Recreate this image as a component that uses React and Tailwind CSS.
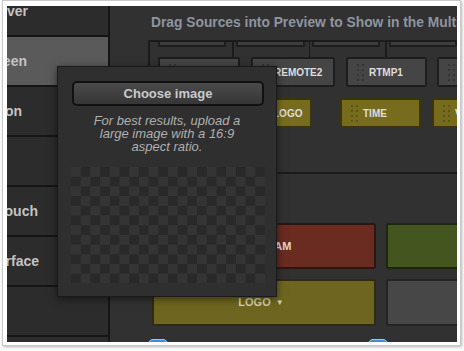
import React from "react";

const font = "font-['Liberation_Sans',Arial,sans-serif]";

const Grip = ({ dot }) => (
  <div className="grid grid-cols-2 gap-x-[3px] gap-y-[3px] shrink-0">
    {[0, 1, 2, 3, 4, 5, 6, 7].map((i) => (
      <span key={i} className={`w-[2px] h-[2px] ${dot}`} />
    ))}
  </div>
);

const Tile = ({ label, w, yellow, className = "" }) => (
  <div
    className={`h-[30px] shrink-0 rounded-[2px] border-2 flex items-center pl-[9px] gap-[5px] ${
      yellow ? "bg-[#776c1d] border-[#3a3410]" : "bg-[#454545] border-[#1d1d1d]"
    } ${w} ${className}`}
  >
    <Grip dot={yellow ? "bg-[#5c5416]" : "bg-[#343434]"} />
    {label && (
      <span className="text-[10px] font-bold text-[#dedede] whitespace-nowrap">{label}</span>
    )}
  </div>
);

const SideRow = ({ label, end, active }) => (
  <div
    className={`h-[50px] shrink-0 border-b-2 border-[#151515] flex items-center ${
      active ? "bg-[#5a5a5a]" : "bg-[#2c2c2c]"
    }`}
  >
    <div className={`${end} flex justify-end whitespace-nowrap text-[14px] font-bold text-[#c3c3c3]`}>
      {label}
    </div>
  </div>
);

export default function App() {
  return (
    <div className={`w-[464px] h-[351px] bg-white ${font}`}>
      <div className="ml-[2px] w-[459px] h-[346px] border border-[#c9c9c9] bg-white pt-[5px] pl-[4px] shadow-[1px_1px_3px_rgba(0,0,0,0.3)]">
        <div className="relative w-[450px] h-[336px] overflow-hidden flex bg-[#313131]">
          {/* sidebar */}
          <div className="w-[103px] shrink-0 border-r-2 border-[#151515] flex flex-col -mt-[19px] overflow-hidden">
            <SideRow label="Server" end="w-[21px]" />
            <SideRow label="Green Screen" end="w-[20px]" active />
            <SideRow label="Transition" end="w-[15px]" />
            <SideRow label="" end="w-[20px]" />
            <SideRow label="Touch" end="w-[31px]" />
            <SideRow label="Surface" end="w-[32px]" />
            <SideRow label="" end="w-[20px]" />
            <SideRow label="" end="w-[20px]" />
          </div>

          {/* main */}
          <div className="flex-1 flex flex-col min-w-0">
            <div className="h-[34px] shrink-0 flex items-center pl-[41px]">
              <span className="text-[13.8px] font-bold text-[#8e959f] whitespace-nowrap">
                Drag Sources into Preview to Show in the Multiview
              </span>
            </div>

            <div className="ml-[38px] h-[134px] shrink-0 border-t-2 border-l-2 border-b-2 border-[#1b1b1b] flex flex-col overflow-hidden">
              <div className="h-[7px] shrink-0 flex items-start">
                <div className="ml-[8px] w-[80px] h-[5px] bg-[#3e3e3e] border-2 border-t-0 border-[#1d1d1d] rounded-b-[2px]" />
                <div className="ml-[6px] w-[2px] h-[15px] bg-[#1b1b1b]" />
                <div className="ml-[2px] w-[81px] h-[5px] bg-[#3e3e3e] border-2 border-t-0 border-[#1d1d1d] rounded-b-[2px]" />
                <div className="ml-[4px] w-[2px] h-[15px] bg-[#1b1b1b]" />
                <div className="ml-[2px] w-[80px] h-[5px] bg-[#3e3e3e] border-2 border-t-0 border-[#1d1d1d] rounded-b-[2px]" />
                <div className="ml-[5px] w-[2px] h-[15px] bg-[#1b1b1b]" />
                <div className="ml-[2px] w-[80px] h-[5px] bg-[#3e3e3e] border-2 border-t-0 border-[#1d1d1d] rounded-b-[2px]" />
              </div>

              <div className="mt-[8px] flex">
                <Tile w="w-[82px]" className="ml-[8px]" />
                <Tile w="w-[84px]" className="ml-[11px]" label="REMOTE2" />
                <Tile w="w-[81px]" className="ml-[11px]" label="RTMP1" />
                <Tile w="w-[80px]" className="ml-[10px]" label="VIDEO" />
              </div>

              <div className="mt-[11px] flex">
                <Tile w="w-[82px]" className="ml-[8px]" yellow />
                <Tile w="w-[62px]" className="ml-[10px]" label="LOGO" yellow />
                <Tile w="w-[81px]" className="ml-[28px]" label="TIME" yellow />
                <Tile w="w-[80px]" className="ml-[11px]" label="VIDEO" yellow />
              </div>
            </div>

            <div className="flex-1 flex flex-col pl-[42px] pt-[49px]">
              <div className="flex gap-[10px]">
                <div className="w-[224px] h-[46px] shrink-0 rounded-[2px] border-2 border-[#2a1712] bg-[#6a2b20] flex items-center justify-center pl-[4px]">
                  <span className="text-[11px] font-bold text-[#e2d6d2]">WEBCAM</span>
                </div>
                <div className="w-[90px] h-[46px] shrink-0 rounded-[2px] border-2 border-[#1f260f] bg-[#44561f]" />
              </div>
              <div className="mt-[10px] flex gap-[10px]">
                <div className="w-[224px] h-[47px] shrink-0 rounded-[2px] border-2 border-[#2f2b0d] bg-[#6e6620] flex items-center justify-center gap-[5px] pr-[6px]">
                  <span className="text-[11px] font-bold text-[#d8d2a6]">LOGO</span>
                  <span className="text-[8px] text-[#d8d2a6]">▼</span>
                </div>
                <div className="w-[90px] h-[47px] shrink-0 rounded-[2px] border-2 border-[#242424] bg-[#474747]" />
              </div>
              <div className="mt-[13px] flex -ml-[4px]">
                <div className="w-[20px] h-[10px] rounded-t-[5px] bg-[#3b8edb] border border-[#9cc8ef]" />
                <div className="ml-[200px] w-[20px] h-[10px] rounded-t-[5px] bg-[#3b8edb] border border-[#9cc8ef]" />
              </div>
            </div>
          </div>

          {/* popover */}
          <div className="absolute left-[50px] top-[60px] w-[220px] h-[231px] bg-[#2f2f2f] border border-[#1a1a1a] shadow-[0_2px_8px_rgba(0,0,0,0.5)] flex flex-col">
            <div className="mt-[14px] ml-[14px] w-[192px] h-[25px] rounded-[5px] border-2 border-[#111] bg-gradient-to-b from-[#4a4a4a] to-[#363636] flex items-center justify-center">
              <span className="text-[13px] font-bold text-[#cacaca]">Choose image</span>
            </div>
            <p className="mt-[8px] px-[8px] text-center text-[13px] italic leading-[13px] text-[#b0b0b0]">
              For best results, upload a
              <br />
              large image with a 16:9
              <br />
              aspect ratio.
            </p>
            <div className="mt-[14px] ml-[13px] w-[194px] h-[116px] bg-[repeating-conic-gradient(#292929_0%_25%,#343434_0%_50%)] bg-[length:19.4px_19.4px]" />
          </div>
        </div>
      </div>
    </div>
  );
}
